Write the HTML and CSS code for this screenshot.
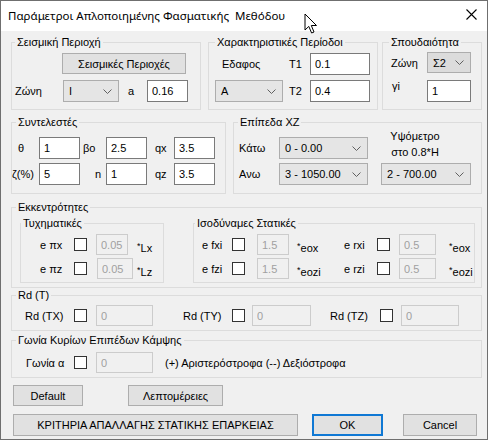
FILE: index.html
```html
<!DOCTYPE html>
<html lang="el">
<head>
<meta charset="utf-8">
<title>Παράμετροι Απλοποιημένης Φασματικής Μεθόδου</title>
<link rel="stylesheet" href="styles.css">
</head>
<body>
<div class="window">
  <div class="titlebar">
    <span class="title">Παράμετροι Απλοποιημένης Φασματικής  Μεθόδου</span>
    <svg class="close" width="11" height="11" viewBox="0 0 11 11"><path d="M0.5 0.5L10.5 10.5M10.5 0.5L0.5 10.5" stroke="#000" stroke-width="1.1" fill="none"/></svg>
  </div>
  <div class="content">
    <div class="row row1">
      <fieldset class="grp g-seis">
        <legend>Σεισμική Περιοχή</legend>
        <button class="btn btn-seis">Σεισμικές Περιοχές</button>
        <div class="line r-seis-b">
          <span class="l-zone">Ζώνη</span>
          <div class="combo w56"><span>I</span><svg class="chev" width="9" height="5" viewBox="0 0 9 5"><path d="M0.5 0.5L4.5 4.5L8.5 0.5" stroke="#606060" fill="none"/></svg></div>
          <span class="l-a">a</span>
          <input class="tb w41" value="0.16">
        </div>
      </fieldset>
      <fieldset class="grp g-per">
        <legend>Χαρακτηριστικές Περίοδοι</legend>
        <div class="line r-per-a">
          <span class="l-edafos">Εδαφος</span>
          <span class="l-t1">T1</span>
          <input class="tb w60" value="0.1">
        </div>
        <div class="line r-per-b">
          <div class="combo w68"><span>A</span><svg class="chev" width="9" height="5" viewBox="0 0 9 5"><path d="M0.5 0.5L4.5 4.5L8.5 0.5" stroke="#606060" fill="none"/></svg></div>
          <span class="l-t2">T2</span>
          <input class="tb w60" value="0.4">
        </div>
      </fieldset>
      <fieldset class="grp g-spoud">
        <legend>Σπουδαιότητα</legend>
        <div class="line r-sp-a">
          <span class="l-spz">Ζώνη</span>
          <div class="combo w44 h21"><span>Σ2</span><svg class="chev" width="9" height="5" viewBox="0 0 9 5"><path d="M0.5 0.5L4.5 4.5L8.5 0.5" stroke="#606060" fill="none"/></svg></div>
        </div>
        <div class="line r-sp-b">
          <span class="l-gi">γi</span>
          <input class="tb w44" value="1">
        </div>
      </fieldset>
    </div>

    <div class="row row2">
      <fieldset class="grp g-syn">
        <legend>Συντελεστές</legend>
        <div class="line r-syn-a">
          <span class="l-th">θ</span>
          <input class="tb w41" value="1">
          <span class="l-bo">βo</span>
          <input class="tb w41" value="2.5">
          <span class="l-q">qx</span>
          <input class="tb w41" value="3.5">
        </div>
        <div class="line r-syn-b">
          <span class="l-z">ζ(%)</span>
          <input class="tb w41" value="5">
          <span class="l-n">n</span>
          <input class="tb w41" value="1">
          <span class="l-q">qz</span>
          <input class="tb w41" value="3.5">
        </div>
      </fieldset>
      <fieldset class="grp g-xz">
        <legend>Επίπεδα XZ</legend>
        <div class="line r-xz-a">
          <span class="l-xz">Κάτω</span>
          <div class="combo w89"><span>0 - 0.00</span><svg class="chev" width="9" height="5" viewBox="0 0 9 5"><path d="M0.5 0.5L4.5 4.5L8.5 0.5" stroke="#606060" fill="none"/></svg></div>
          <div class="ypsos">Υψόμετρο<br>στο 0.8*Η</div>
        </div>
        <div class="line r-xz-b">
          <span class="l-xz">Ανω</span>
          <div class="combo w89"><span>3 - 1050.00</span><svg class="chev" width="9" height="5" viewBox="0 0 9 5"><path d="M0.5 0.5L4.5 4.5L8.5 0.5" stroke="#606060" fill="none"/></svg></div>
          <div class="combo w90 ml13"><span>2 - 700.00</span><svg class="chev" width="9" height="5" viewBox="0 0 9 5"><path d="M0.5 0.5L4.5 4.5L8.5 0.5" stroke="#606060" fill="none"/></svg></div>
        </div>
      </fieldset>
    </div>

    <fieldset class="grp g-ekk">
      <legend>Εκκεντρότητες</legend>
      <div class="row inner-row">
        <fieldset class="grp g-tyx">
          <legend>Τυχηματικές</legend>
          <div class="line r-tyx-a">
            <span class="l-e34">e πx</span>
            <span class="cb"></span>
            <input class="tb dis w32 ml9" value="0.05" disabled>
            <span class="unit ml9"><span class="ast">*</span>Lx</span>
          </div>
          <div class="line r-tyx-b">
            <span class="l-e34">e πz</span>
            <span class="cb"></span>
            <input class="tb dis w36 ml10" value="0.05" disabled>
            <span class="unit ml4"><span class="ast">*</span>Lz</span>
          </div>
        </fieldset>
        <fieldset class="grp g-iso">
          <legend>Ισοδύναμες Στατικές</legend>
          <div class="line r-iso">
            <span class="l-e30">e fxi</span>
            <span class="cb"></span>
            <input class="tb dis w32 ml12" value="1.5" disabled>
            <span class="unit u47 ml8"><span class="ast">*</span>eox</span>
            <span class="l-e33">e rxi</span>
            <span class="cb"></span>
            <input class="tb dis w37 ml9" value="0.5" disabled>
            <span class="unit ml13"><span class="ast">*</span>eox</span>
          </div>
          <div class="line r-iso r-iso-b">
            <span class="l-e30">e fzi</span>
            <span class="cb"></span>
            <input class="tb dis w32 ml12" value="1.5" disabled>
            <span class="unit u47 ml8"><span class="ast">*</span>eozi</span>
            <span class="l-e33">e rzi</span>
            <span class="cb"></span>
            <input class="tb dis w37 ml9" value="0.5" disabled>
            <span class="unit ml13"><span class="ast">*</span>eozi</span>
          </div>
        </fieldset>
      </div>
    </fieldset>

    <fieldset class="grp g-rd">
      <legend>Rd (T)</legend>
      <div class="line r-rd">
        <span class="l-rd49">Rd (TX)</span>
        <span class="cb"></span>
        <input class="tb dis w57 ml9" value="0" disabled>
        <span class="l-rd49 ml30">Rd (TY)</span>
        <span class="cb"></span>
        <input class="tb dis w59 ml7" value="0" disabled>
        <span class="l-rd50 ml19">Rd (TZ)</span>
        <span class="cb"></span>
        <input class="tb dis w58 ml8" value="0" disabled>
      </div>
    </fieldset>

    <fieldset class="grp g-gon">
      <legend>Γωνία Κυρίων Επιπέδων Κάμψης</legend>
      <div class="line r-gon">
        <span class="l-gon">Γωνία α</span>
        <span class="cb"></span>
        <input class="tb dis w57 ml9" value="0" disabled>
        <span class="ml12">(+) Αριστερόστροφα (--) Δεξιόστροφα</span>
      </div>
    </fieldset>

    <div class="row btn-row1">
      <button class="btn b-default">Default</button>
      <button class="btn b-lept">Λεπτομέρειες</button>
    </div>
    <div class="row btn-row2">
      <button class="btn b-krit">ΚΡΙΤΗΡΙΑ ΑΠΑΛΛΑΓΗΣ ΣΤΑΤΙΚΗΣ ΕΠΑΡΚΕΙΑΣ</button>
      <button class="btn b-ok">OK</button>
      <button class="btn b-cancel">Cancel</button>
    </div>
  </div>
  <svg class="cursor" width="14" height="22" viewBox="0 0 14 22"><path d="M1 1L1 17L4.8 13.4L7.6 20L10 19L7.3 12.5L12.5 12.5Z" fill="#fff" stroke="#000" stroke-width="1" stroke-linejoin="miter"/></svg>
</div>
</body>
</html>
```

FILE: styles.css
```css
* { box-sizing: border-box; }
body {
  margin: 0;
  font-family: "Liberation Sans", Arial, sans-serif;
  font-size: 11px;
  color: #000;
}
.window {
  position: relative;
  width: 488px;
  height: 440px;
  border: 1px solid #6f6f6f;
  background: #f0f0f0;
  display: flex;
  flex-direction: column;
}
.titlebar {
  height: 30px;
  flex: none;
  background: #fff;
  display: flex;
  align-items: center;
  padding: 0 10px 1px 7px;
  font-family: "Noto Sans", sans-serif;
  font-size: 11.5px;
}
.title { flex: 1; white-space: pre; }
.close { display: block; margin-bottom: 2px; }
.cursor { position: absolute; left: 303px; top: 12px; }

.content {
  padding: 5px 5px 0 10px;
  display: flex;
  flex-direction: column;
}
.row { display: flex; }
.line { display: flex; align-items: center; }

.grp {
  margin: 0;
  padding: 0;
  border: 1px solid #dcdcdc;
  min-width: 0;
}
.grp > legend {
  padding: 0 2px;
  margin-left: 4px;
  line-height: 13px;
  height: 13px;
}

/* controls */
.btn {
  display: block;
  margin: 0;
  padding: 0;
  height: 21px;
  background: #e1e1e1;
  border: 1px solid #adadad;
  font-family: "Liberation Sans", Arial, sans-serif;
  font-size: 11px;
  color: #000;
}
.tb {
  display: block;
  margin: 0;
  height: 22px;
  padding: 0 4px;
  background: #fff;
  border: 1px solid #7a7a7a;
  font-family: "Liberation Sans", Arial, sans-serif;
  font-size: 11px;
  color: #000;
  outline: none;
}
.tb.dis {
  height: 21px;
  background: #f0f0f0;
  border-color: #cccccc;
  color: #a0a0a0;
  -webkit-text-fill-color: #a0a0a0;
  opacity: 1;
}
.combo {
  display: flex;
  align-items: center;
  justify-content: space-between;
  height: 22px;
  padding: 0 6px 0 5px;
  background: #e5e5e5;
  border: 1px solid #adadad;
}
.combo.h21 { height: 21px; background: #dcdcdc; }
.chev { display: block; }
.cb {
  flex: none;
  width: 13px;
  height: 13px;
  background: #fff;
  border: 1px solid #333;
}
.unit { margin-top: 6px; }
.ast { font-size: 9px; vertical-align: 3px; }

.w32 { width: 32px; } .w36 { width: 36px; } .w37 { width: 37px; }
.w41 { width: 41px; } .w44 { width: 44px; } .w56 { width: 56px; }
.w57 { width: 57px; } .w58 { width: 58px; } .w59 { width: 59px; }
.w60 { width: 60px; } .w68 { width: 68px; } .w89 { width: 89px; }
.w90 { width: 90px; }
.ml4 { margin-left: 4px; } .ml7 { margin-left: 7px; } .ml8 { margin-left: 8px; }
.ml9 { margin-left: 9px; } .ml10 { margin-left: 10px; } .ml12 { margin-left: 12px; }
.ml13 { margin-left: 13px; } .ml19 { margin-left: 19px; } .ml30 { margin-left: 30px; }

/* row 1 */
.g-seis { width: 190px; height: 74px; }
.g-seis > legend { margin-left: 3px; }
.g-per { width: 170px; height: 74px; margin-left: 7px; }
.g-per > legend { margin-left: 6px; }
.g-spoud { width: 100px; height: 74px; margin-left: 4px; }
.g-spoud > legend { margin-left: 6px; }

.btn-seis { width: 124px; margin: 4px 0 0 50px; }
.r-seis-b { margin-top: 6px; padding-left: 3px; }
.l-zone { width: 48px; }
.l-a { width: 28px; padding-left: 9px; }

.r-per-a { margin-top: 4px; padding-left: 13px; }
.l-edafos { width: 67px; }
.l-t1 { width: 21px; }
.r-per-b { margin-top: 5px; padding-left: 6px; }
.l-t2 { width: 27px; padding-left: 6px; }

.r-sp-a { margin-top: 3px; padding-left: 8px; }
.l-spz { width: 36px; }
.r-sp-b { margin-top: 7px; padding-left: 9px; align-items: flex-start; }
.l-gi { width: 35px; line-height: 13px; }

/* row 2 */
.row2 { margin-top: 6px; }
.g-syn { width: 215px; height: 78px; }
.g-xz { width: 249px; height: 78px; margin-left: 7px; }
.r-syn-a { margin-top: 8px; padding-left: 6px; }
.r-syn-b { margin-top: 4px; }
.l-th { width: 21px; }
.l-z { width: 27px; }
.l-bo { width: 26px; padding-left: 3px; }
.l-n { width: 26px; padding-left: 15px; }
.l-q { width: 27px; padding-left: 8px; }

.r-xz-a { margin-top: 8px; padding-left: 5px; height: 22px; align-items: flex-start; }
.r-xz-a .l-xz { line-height: 22px; }
.r-xz-b { margin-top: 4px; padding-left: 5px; }
.l-xz { width: 40px; }
.ypsos { width: 94px; margin-top: -9px; text-align: center; line-height: 16px; }

/* row 3 */
.g-ekk { margin-top: 7px; height: 87px; }
.inner-row { margin-top: 3px; }
.g-tyx { width: 144px; height: 66px; margin-left: 8px; }
.g-tyx > legend { margin-left: 0; }
.g-iso { width: 282px; height: 66px; margin-left: 29px; }
.g-iso > legend { margin-left: 1px; }
.r-tyx-a { margin-top: 4px; padding-left: 19px; height: 21px; }
.r-tyx-b { margin-top: 3px; padding-left: 19px; height: 21px; }
.l-e34 { width: 34px; }
.r-iso { margin-top: 4px; padding-left: 8px; height: 21px; }
.r-iso-b { margin-top: 3px; }
.l-e30 { width: 30px; }
.l-e33 { width: 33px; }
.u47 { width: 47px; }

/* row 4 */
.g-rd { margin-top: 1px; height: 42px; }
.r-rd { margin-top: 3px; padding-left: 13px; height: 21px; }
.l-rd49 { width: 49px; }
.l-rd50 { width: 50px; }

/* row 5 */
.g-gon { margin-top: 3px; height: 44px; }
.r-gon { margin-top: 5px; padding-left: 14px; height: 21px; }
.l-gon { width: 48px; }

/* buttons */
.btn-row1 { margin-top: 7px; }
.b-default { width: 70px; margin-left: 2px; }
.b-lept { width: 95px; margin-left: 45px; }
.btn-row2 { margin-top: 8px; }
.btn-row2 .btn { height: 22px; }
.b-krit { width: 285px; margin-left: 2px; }
.b-ok { width: 71px; margin-left: 14px; border: 2px solid #0f78d4; }
.b-cancel { width: 74px; margin-left: 20px; }
```
